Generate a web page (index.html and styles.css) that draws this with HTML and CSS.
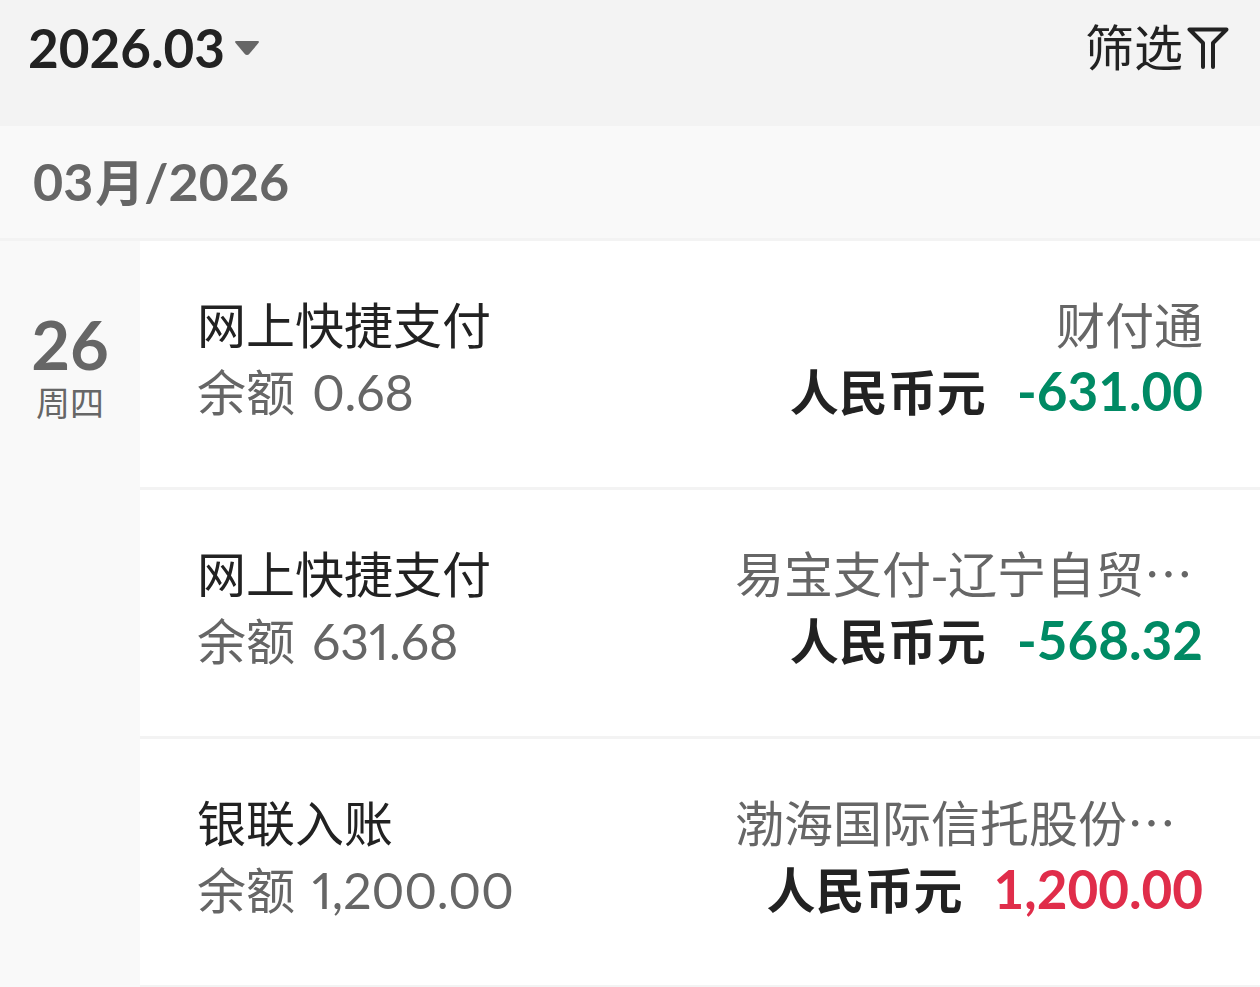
FILE: index.html
```html
<!DOCTYPE html>
<html lang="zh-CN">

<head>
    <meta charset="UTF-8">
    <meta name="viewport" content="width=device-width, initial-scale=1">
    <title>交易明细</title>
    <link rel="stylesheet" href="styles.css">
</head>

<body>

    <header class="topbar">
        <div class="month-picker">
            <select class="month-select" id="month" aria-label="月份">
                <option selected>2026.03</option>
                <option>2026.02</option>
                <option>2026.01</option>
            </select>
            <svg class="caret" viewBox="0 0 26 16" aria-hidden="true">
                <path d="M2.5 1H23.5Q26 1 24.4 3L15.6 13.6Q13 16.6 10.4 13.6L1.6 3Q0 1 2.5 1Z" />
            </svg>
        </div>
        <button class="filter" type="button">
            筛选
            <svg class="funnel" viewBox="0 0 42 44" aria-hidden="true">
                <path d="M16 41V17L2.5 3.5H39.5L26 17V41" />
            </svg>
        </button>
    </header>

    <h1 class="month-title">03<span class="unit">月</span>/2026</h1>

    <main class="day">
        <div class="date">
            <div class="date-num">26</div>
            <div class="date-week">周四</div>
        </div>

        <ul class="list">
            <li class="item">
                <div class="line">
                    <span class="title">网上快捷支付</span>
                    <span class="party">财付通</span>
                </div>
                <div class="line">
                    <span class="balance">余额 <span class="num">0.68</span></span>
                    <span class="money">人民币元 <span class="num out">-631.00</span></span>
                </div>
            </li>
            <li class="item">
                <div class="line">
                    <span class="title">网上快捷支付</span>
                    <span class="party long">易宝支付-辽宁自贸…</span>
                </div>
                <div class="line">
                    <span class="balance">余额 <span class="num">631.68</span></span>
                    <span class="money">人民币元 <span class="num out">-568.32</span></span>
                </div>
            </li>
            <li class="item">
                <div class="line">
                    <span class="title">银联入账</span>
                    <span class="party long">渤海国际信托股份…</span>
                </div>
                <div class="line">
                    <span class="balance">余额 <span class="num">1,200.00</span></span>
                    <span class="money">人民币元 <span class="num in">1,200.00</span></span>
                </div>
            </li>
        </ul>
    </main>

</body>

</html>
```
FILE: styles.css
```css
* {
    box-sizing: border-box;
}

body {
    margin: 0;
    background-color: #f9f9f9;
    color: #222;
    font-family: 'Noto Sans CJK SC', sans-serif;
    font-size: 49px;
    line-height: 67px;
}

.topbar {
    display: flex;
    justify-content: space-between;
    align-items: flex-start;
    height: 126px;
    padding: 14px 31px 0 28px;
    background-color: #f3f3f3;
}

.month-picker {
    display: flex;
    align-items: center;
    gap: 8px;
}

.month-select {
    appearance: none;
    padding: 0;
    border: 0;
    background: none;
    color: #222;
    font: 700 53px/67px Lato, sans-serif;
}

.caret {
    width: 26px;
    height: 16px;
    fill: #666;
}

.filter {
    display: flex;
    align-items: flex-start;
    gap: 4px;
    padding: 0;
    border: 0;
    background: none;
    color: #222;
    font: inherit;
    line-height: 62px;
}

.funnel {
    width: 42px;
    height: 44px;
    margin-top: 12px;
    fill: none;
    stroke: #222;
    stroke-width: 4;
    stroke-linecap: round;
    stroke-linejoin: round;
}

.month-title {
    margin: 0;
    padding: 22px 33px 23px;
    border-bottom: 3px solid #f3f3f3;
    color: #666;
    font: 700 52px/67px Lato, sans-serif;
}

.unit {
    margin-left: 2px;
    font-family: 'Noto Sans CJK SC', sans-serif;
    font-size: 49px;
    line-height: 1;
}

/* one day: date on the left, its records on the right */
.day {
    display: flex;
}

.date {
    width: 140px;
    padding-top: 70px;
    color: #666;
    text-align: center;
}

.date-num {
    font: 700 67px/67px Lato, sans-serif;
}

.date-week {
    font-size: 34px;
    line-height: 48px;
}

.list {
    flex: 1;
    margin: 0;
    padding: 0;
    background-color: #fff;
    list-style: none;
}

.item {
    padding: 48px 57px 64px;
    border-bottom: 3px solid #f3f3f3;
}

.line {
    display: flex;
    justify-content: space-between;
    height: 67px;
    white-space: nowrap;
}

.party,
.balance {
    color: #666;
}

.long {
    width: 468px;
}

.num {
    font-family: Lato, sans-serif;
    font-size: 53px;
}

.balance .num {
    margin-left: 6px;
    font-size: 50px;
    font-feature-settings: 'pnum';
}

.money {
    font-weight: 700;
}

.money .num {
    margin-left: 20px;
}

.out {
    color: #008a64;
}

.in {
    color: #e02d4a;
}
```
